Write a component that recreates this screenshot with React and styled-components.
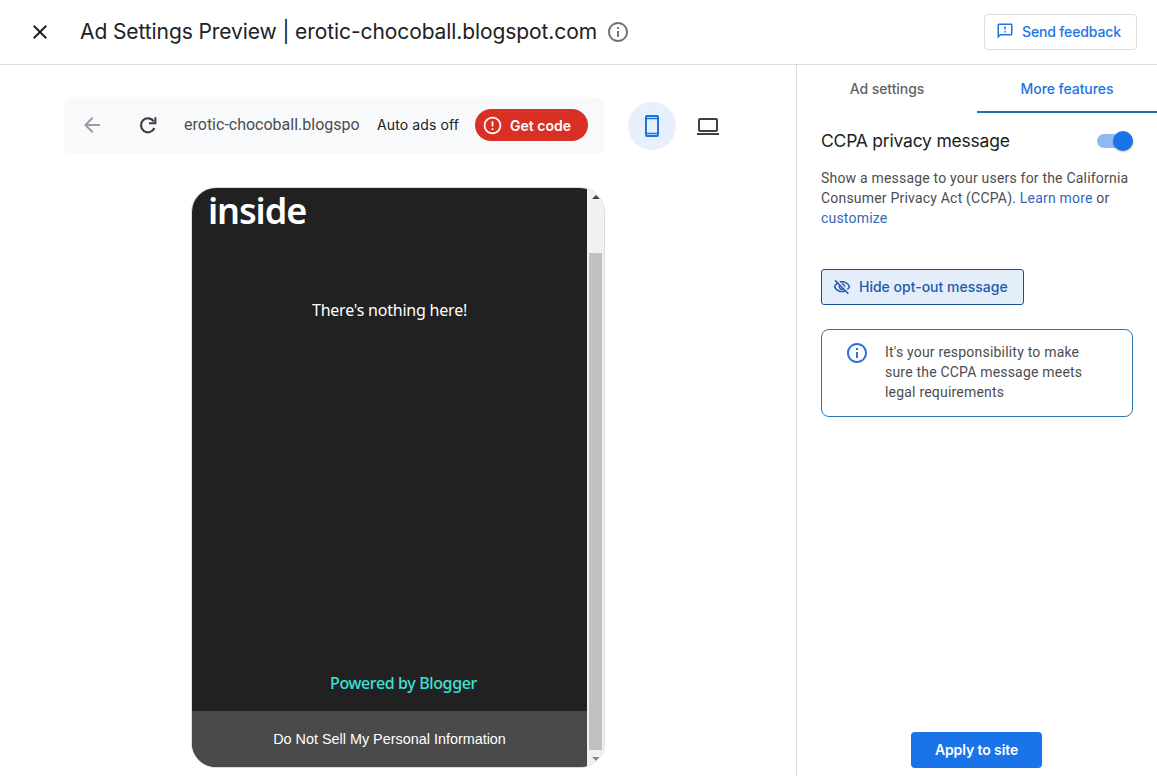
import React from "react";
import styled, { createGlobalStyle } from "styled-components";
import {
  MdClose,
  MdArrowBack,
  MdInfoOutline,
  MdErrorOutline,
  MdOutlineFeedback,
  MdOutlineVisibilityOff,
} from "react-icons/md";

const GlobalStyle = createGlobalStyle`
  * {
    box-sizing: border-box;
  }

  body {
    margin: 0;
    background: #fff;
    color: #202124;
    font-family: Roboto, "Liberation Sans", sans-serif;
    overflow: hidden;
  }

  h1, h2, p {
    margin: 0;
    font-weight: 400;
  }

  svg {
    display: block;
    flex-shrink: 0;
  }

  button {
    font-family: inherit;
    margin: 0;
    padding: 0;
    border: 0;
    background: none;
  }
`;

const brandFont = `Inter, "Open Sans", sans-serif`;
const blogFont = `"Noto Sans", "Open Sans", sans-serif`;

const Page = styled.div`
  display: flex;
  flex-direction: column;
  width: 1157px;
  height: 776px;
`;

const Header = styled.header`
  display: flex;
  align-items: center;
  height: 65px;
  padding: 0 20px 1px 28px;
  border-bottom: 1px solid #dadce0;
`;

const CloseButton = styled.button`
  margin-right: 28px;
  color: #202124;
`;

const PageTitle = styled.h1`
  width: 517px;
  margin-right: 9px;
  font-family: ${brandFont};
  font-size: 21px;
  line-height: 28px;
  letter-spacing: -0.09px;
  white-space: nowrap;
`;

const FeedbackButton = styled.button`
  display: flex;
  align-items: center;
  gap: 8px;
  width: 153px;
  height: 36px;
  margin-left: auto;
  padding: 0 0 1px 11px;
  border: 1px solid #dadce0;
  border-radius: 4px;
  color: #1a73e8;
  font-family: ${brandFont};
  font-size: 14px;
  font-weight: 500;
  white-space: nowrap;
  letter-spacing: -0.15px;
`;

const Body = styled.div`
  display: flex;
  flex: 1;
  min-height: 0;
`;

const Preview = styled.main`
  flex: 1;
  padding: 32px 0 0 64px;
`;

const Toolbar = styled.div`
  display: flex;
  align-items: center;
`;

const AddressBar = styled.div`
  display: flex;
  align-items: center;
  width: 540px;
  height: 57px;
  padding: 0 16px 1px;
  border-radius: 8px;
  background: #f8f9fb;
`;

const NavButton = styled.button`
  display: flex;
  width: 24px;
  height: 24px;
  align-items: center;
  justify-content: center;
  margin-right: 32px;
  color: ${(props) => (props.$disabled ? "#9a9c9f" : "#3c4043")};
`;

const Address = styled.span`
  width: 176px;
  margin-left: -8px;
  overflow: hidden;
  color: #4a4d51;
  font-size: 16px;
  line-height: 24px;
  white-space: nowrap;
`;

const AdsStatus = styled.span`
  width: 83px;
  margin: 0 15px 2px 17px;
  font-family: ${brandFont};
  font-size: 14px;
  letter-spacing: 0.12px;
  white-space: nowrap;
`;

const GetCode = styled.button`
  display: flex;
  align-items: center;
  gap: 7px;
  width: 113px;
  height: 32px;
  padding-left: 7px;
  border-radius: 16px;
  background: #d93025;
  color: #fff;
  font-family: ${brandFont};
  font-size: 14px;
  font-weight: 600;
  white-space: nowrap;
`;

const DeviceButton = styled.button`
  display: flex;
  align-items: center;
  justify-content: center;
  width: 48px;
  height: 48px;
  margin-top: 1px;
  margin-left: ${(props) => (props.$active ? "24px" : "8px")};
  border-radius: 50%;
  background: ${(props) => (props.$active ? "#e8f0fe" : "transparent")};
  color: ${(props) => (props.$active ? "#1a73e8" : "#3c4043")};
`;

const Phone = styled.div`
  display: flex;
  width: 414px;
  height: 581px;
  margin: 33px 0 0 127px;
  border: 1px solid #dadce0;
  border-radius: 25px;
  overflow: hidden;
`;

const Screen = styled.div`
  display: flex;
  flex-direction: column;
  width: 395px;
  background: #212121;
  color: #fff;
  font-family: ${blogFont};
`;

const BlogTitle = styled.h2`
  padding: 1px 16px 0;
  font-size: 36px;
  font-weight: 600;
  line-height: 44px;
  letter-spacing: -1.1px;
`;

const EmptyNotice = styled.p`
  margin-top: 65px;
  font-size: 16px;
  line-height: 24px;
  text-align: center;
  letter-spacing: -0.22px;
`;

const PoweredBy = styled.p`
  margin-top: auto;
  padding: 0 0 16px 138px;
  color: #3ce0d9;
  font-size: 16px;
  font-weight: 500;
  line-height: 24px;
  letter-spacing: -0.37px;
  white-space: nowrap;
`;

const OptOut = styled.div`
  height: 56px;
  background: #4a4a4a;
  font-family: "Liberation Sans", Arial, sans-serif;
  font-size: 14.4px;
  line-height: 56px;
  text-align: center;
`;

const Scrollbar = styled.div`
  display: flex;
  flex-direction: column;
  align-items: center;
  width: 17px;
  padding: 7px 0 6px;
  background: #f1f1f1;
`;

const Arrow = styled.div`
  width: 0;
  height: 0;
  border: 4px solid transparent;
  border-top-width: ${(props) => (props.$down ? "4px" : "0")};
  border-bottom-width: ${(props) => (props.$down ? "0" : "4px")};
  border-top-color: ${(props) => (props.$down ? "#888" : "transparent")};
  border-bottom-color: ${(props) => (props.$down ? "transparent" : "#444")};
`;

const Thumb = styled.div`
  flex: 1;
  width: 13px;
  margin: 54px 0 7px;
  background: #c1c1c1;
`;

const Sidebar = styled.aside`
  display: flex;
  flex-direction: column;
  width: 361px;
  border-left: 1px solid #dadce0;
`;

const Tabs = styled.div`
  display: flex;
  height: 48px;
`;

const Tab = styled.button`
  flex: 1;
  border-bottom: 2px solid ${(props) => (props.$active ? "#2273ad" : "transparent")};
  color: ${(props) => (props.$active ? "#1a73e8" : "#5f6368")};
  font-family: ${brandFont};
  font-size: 14px;
  font-weight: 500;
  letter-spacing: -0.06px;
`;

const Feature = styled.section`
  display: flex;
  flex: 1;
  flex-direction: column;
  align-items: flex-start;
  padding: 14px 24px 8px;
`;

const FeatureHeader = styled.div`
  display: flex;
  align-items: center;
  justify-content: space-between;
  width: 100%;
  height: 28px;
`;

const FeatureTitle = styled.h2`
  padding-bottom: 1px;
  font-family: ${brandFont};
  font-size: 17.5px;
  letter-spacing: -0.22px;
  white-space: nowrap;
`;

const Switch = styled.div`
  display: flex;
  align-items: center;
  justify-content: flex-end;
  width: 36px;
  height: 14px;
  border-radius: 7px;
  background: #8fb8f5;
`;

const Knob = styled.div`
  width: 20px;
  height: 20px;
  border-radius: 50%;
  background: #1a73e8;
  box-shadow: 0 1px 2px rgba(0, 0, 0, 0.25);
`;

const Description = styled.p`
  width: 312px;
  margin-top: 13px;
  color: #4b4d50;
  font-size: 14px;
  line-height: 20px;
  letter-spacing: 0.2px;
  white-space: nowrap;
`;

const Link = styled.a`
  color: #3367b8;
`;

const HideButton = styled.button`
  display: flex;
  align-items: center;
  gap: 8px;
  width: 203px;
  height: 36px;
  margin-top: 41px;
  padding: 0 0 1px 11px;
  border: 1px solid #1c4f8f;
  border-radius: 3px;
  background: #e4eefb;
  color: #2459ab;
  font-family: ${brandFont};
  font-size: 14px;
  font-weight: 500;
  white-space: nowrap;
`;

const Notice = styled.div`
  display: flex;
  gap: 16px;
  width: 312px;
  height: 88px;
  margin-top: 24px;
  padding: 12px 23px;
  border: 1px solid #2e76ad;
  border-radius: 8px;
  color: #4b4d50;
  font-size: 14px;
  line-height: 20px;
  letter-spacing: 0.2px;
  white-space: nowrap;

  svg {
    margin-top: -1px;
  }
`;

const ApplyButton = styled.button`
  width: 131px;
  height: 36px;
  margin: auto 0 0 90px;
  padding-bottom: 2px;
  border-radius: 4px;
  background: #1a73e8;
  color: #fff;
  font-family: ${brandFont};
  font-size: 14px;
  font-weight: 600;
  letter-spacing: -0.1px;
`;

const ReloadIcon = () => (
  <svg width="24" height="24" viewBox="0 0 24 24" fill="none">
    <path
      d="M17.8 8.4A7 7 0 1 0 18.4 15"
      stroke="currentColor"
      strokeWidth="2.2"
    />
    <path d="M13 10.2h6.4V4.3" stroke="currentColor" strokeWidth="2" />
  </svg>
);

const PhoneIcon = () => (
  <svg width="24" height="24" viewBox="0 0 24 24" fill="none">
    <rect
      x="6"
      y="2"
      width="12"
      height="20"
      rx="1"
      stroke="currentColor"
      strokeWidth="2"
    />
    <path d="M6 4.5h12M6 19.5h12" stroke="currentColor" strokeWidth="1.3" />
  </svg>
);

const LaptopIcon = () => (
  <svg width="24" height="24" viewBox="0 0 24 24" fill="none">
    <rect
      x="3"
      y="5"
      width="18"
      height="12"
      rx="1"
      stroke="currentColor"
      strokeWidth="2"
    />
    <path d="M1 20h22" stroke="currentColor" strokeWidth="2" />
  </svg>
);

const TopBar = () => (
  <Header>
    <CloseButton aria-label="Close">
      <MdClose size={24} />
    </CloseButton>
    <PageTitle>Ad Settings Preview | erotic-chocoball.blogspot.com</PageTitle>
    <MdInfoOutline size={24} color="#757575" />
    <FeedbackButton>
      <MdOutlineFeedback size={18} />
      Send feedback
    </FeedbackButton>
  </Header>
);

const PhonePreview = () => (
  <Phone>
    <Screen>
      <BlogTitle>inside</BlogTitle>
      <EmptyNotice>There's nothing here!</EmptyNotice>
      <PoweredBy>Powered by Blogger</PoweredBy>
      <OptOut>Do Not Sell My Personal Information</OptOut>
    </Screen>
    <Scrollbar>
      <Arrow />
      <Thumb />
      <Arrow $down />
    </Scrollbar>
  </Phone>
);

const FeaturesPanel = () => (
  <Sidebar>
    <Tabs>
      <Tab>Ad settings</Tab>
      <Tab $active>More features</Tab>
    </Tabs>
    <Feature>
      <FeatureHeader>
        <FeatureTitle>CCPA privacy message</FeatureTitle>
        <Switch role="switch" aria-checked="true">
          <Knob />
        </Switch>
      </FeatureHeader>
      <Description>
        Show a message to your users for the California
        <br />
        Consumer Privacy Act (CCPA). <Link>Learn more</Link> or
        <br />
        <Link>customize</Link>
      </Description>
      <HideButton>
        <MdOutlineVisibilityOff size={18} />
        Hide opt-out message
      </HideButton>
      <Notice>
        <MdInfoOutline size={24} color="#2a6fdb" />
        <p>
          It's your responsibility to make
          <br />
          sure the CCPA message meets
          <br />
          legal requirements
        </p>
      </Notice>
      <ApplyButton>Apply to site</ApplyButton>
    </Feature>
  </Sidebar>
);

export default function App() {
  return (
    <Page>
      <GlobalStyle />
      <TopBar />
      <Body>
        <Preview>
          <Toolbar>
            <AddressBar>
              <NavButton $disabled aria-label="Back">
                <MdArrowBack size={24} />
              </NavButton>
              <NavButton aria-label="Reload">
                <ReloadIcon />
              </NavButton>
              <Address>erotic-chocoball.blogspo</Address>
              <AdsStatus>Auto ads off</AdsStatus>
              <GetCode>
                <MdErrorOutline size={21} />
                Get code
              </GetCode>
            </AddressBar>
            <DeviceButton $active aria-label="Mobile">
              <PhoneIcon />
            </DeviceButton>
            <DeviceButton aria-label="Desktop">
              <LaptopIcon />
            </DeviceButton>
          </Toolbar>
          <PhonePreview />
        </Preview>
        <FeaturesPanel />
      </Body>
    </Page>
  );
}
